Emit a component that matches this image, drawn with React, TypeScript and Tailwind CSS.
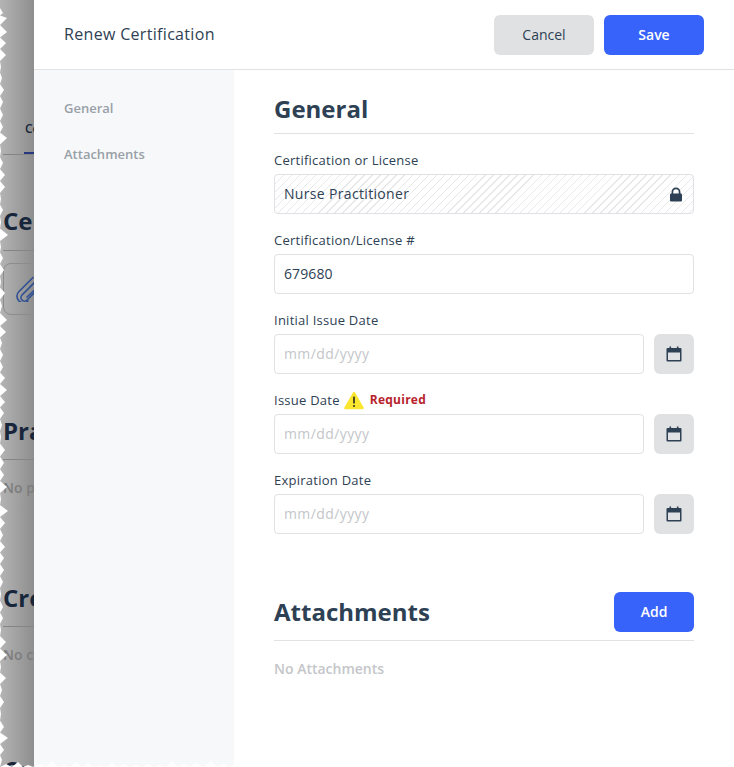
import React from "react";

const tips: number[][] = [[13,3],[18,7],[32,7],[43,6],[55,6],[67,1],[78,2],[90,4],[102,3],[115,3],[127,3],[138,7],[151,1],[163,3],[175,5],[187,5],[199,1],[210,3],[222,1],[235,8],[247,1],[258,3],[270,4],[282,1],[293,5],[306,2],[320,7],[332,6],[343,2],[355,3],[367,3],[378,5],[390,7],[402,5],[413,4],[425,2],[437,1],[450,5],[463,4],[475,4],[487,7],[499,1],[511,8],[523,5],[535,3],[547,5],[558,4],[570,4],[582,3],[594,1],[607,3],[618,3],[630,1],[642,6],[655,7],[667,1],[678,6],[690,2],[702,4],[714,1],[727,4],[738,8],[750,4],[760,2]];

function tornPoints() {
  const pts: string[] = ["0,8"];
  tips.forEach(([y, x], i) => {
    pts.push(`${x},${y}`);
    const next = tips[i + 1];
    pts.push(`0,${next ? (y + next[0]) / 2 : 767}`);
  });
  return pts.join(" ");
}

const bottomTips = [[6,764],[18,762],[28,765],[40,764],[52,761],[64,765],[76,762],[88,763],[100,765],[112,763],[124,764],[136,765],[148,764],[160,765],[172,761],[184,764],[196,763],[211,761],[224,764],[234,765]];
function bottomPoints() {
  const pts: string[] = ["0,767"];
  bottomTips.forEach(([x, y], i) => {
    pts.push(`${x},${y}`);
    const next = bottomTips[i + 1];
    if (next) pts.push(`${(x + next[0]) / 2},767`);
  });
  pts.push("234,767");
  return pts.join(" ");
}

function Calendar() {
  return (
    <svg width="16" height="16" viewBox="0 0 16 16" fill="none">
      <rect x="0.5" y="2" width="15" height="13.5" rx="1" fill="#2e4154" />
      <rect x="2" y="6.5" width="12" height="7.5" fill="#e0e2e5" />
      <rect x="3.5" y="0.5" width="1.6" height="3" fill="#2e4154" />
      <rect x="10.9" y="0.5" width="1.6" height="3" fill="#2e4154" />
    </svg>
  );
}

function Lock() {
  return (
    <svg width="14" height="15" viewBox="0 0 14 15" fill="none">
      <rect x="1" y="6.5" width="12" height="8" rx="1" fill="#2e4154" />
      <path d="M3.4 7V4.9a3.6 3.6 0 0 1 7.2 0V7" stroke="#2e4154" strokeWidth="1.7" />
    </svg>
  );
}

function Warn() {
  return (
    <svg width="20" height="19" viewBox="0 0 20 19" fill="none">
      <path d="M10 2 L18.6 17 H1.4 Z" fill="#fae62f" stroke="#fae62f" strokeWidth="2.4" strokeLinejoin="round" />
      <rect x="9.1" y="5.5" width="1.8" height="7" rx="0.6" fill="#3a3a1e" />
      <circle cx="10" cy="15" r="1.1" fill="#3a3a1e" />
    </svg>
  );
}

function Label({ children }: { children: React.ReactNode }) {
  return <div className="h-[24px] text-[13px] leading-[20px] font-medium tracking-[0.25px] text-[#2e4154]">{children}</div>;
}

function DateField({ label }: { label: React.ReactNode }) {
  return (
    <div className="mt-[16px] h-[64px]">
      <Label>{label}</Label>
      <div className="flex gap-[10px]">
        <div className="flex h-[40px] flex-1 items-center rounded-[4px] border border-[#dfe1e4] bg-white px-[9px] pb-[2px] text-[14px] font-medium tracking-[0.4px] text-[#c4c6c9]">
          mm/dd/yyyy
        </div>
        <button className="flex h-[40px] w-[40px] items-center justify-center rounded-[6px] bg-[#dfe1e3]">
          <Calendar />
        </button>
      </div>
    </div>
  );
}

export default function App() {
  return (
    <div className="relative flex h-[767px] w-[734px] overflow-hidden bg-white font-['Open_Sans',sans-serif]">
      <div className="relative h-full w-[34px] shrink-0 overflow-hidden bg-[linear-gradient(to_right,#b4b4b4,#8e8e8e)]">
        <div className="flex w-[200px] flex-col pl-[3px] text-[#17263a]">
          <div className="ml-[22px] mt-[121px] h-[16px] text-[12px] font-semibold leading-[16px]">Certifications</div>
          <div className="ml-[21px] mt-[15px] h-[2px] w-[60px] bg-[#26397f]" />
          <div className="h-px w-full bg-[#858585]" />
          <div className="mt-[49px] h-[34px] text-[24px] font-bold leading-[34px]">Certifications</div>
          <div className="mt-[12px] h-px bg-[#858585]" />
          <div className="mt-[12px] flex h-[52px] items-center rounded-[8px] border border-[#8c8c8c] pl-[12px]">
            <svg width="26" height="26" viewBox="0 0 26 26" fill="none" stroke="#2f4f93" strokeWidth="1.6" strokeLinecap="round">
              <path d="M21 4 6 19a3.5 3.5 0 0 0 5 5L24 11" />
              <path d="M17 1.5 3 15.5a6.5 6.5 0 0 0 9 9.5" />
              <path d="M21 4a3 3 0 0 1 4 4L11 21" />
            </svg>
          </div>
          <div className="mt-[99px] h-[34px] text-[24px] font-bold leading-[34px]">Practice</div>
          <div className="mt-[11px] h-px bg-[#858585]" />
          <div className="mt-[18px] h-[20px] text-[14px] font-semibold leading-[20px] text-[#7d7d7d]">No practice</div>
          <div className="mt-[83px] h-[34px] text-[24px] font-bold leading-[34px]">Credentials</div>
          <div className="mt-[11px] h-px bg-[#858585]" />
          <div className="mt-[18px] h-[20px] text-[14px] font-semibold leading-[20px] text-[#7d7d7d]">No credentials</div>
          <div className="mt-[88px] h-[34px] text-[24px] font-bold leading-[34px]">Current</div>
        </div>
        <svg className="absolute left-0 top-0" width="10" height="767" viewBox="0 0 10 767">
          <polygon points={tornPoints()} fill="#ffffff" />
        </svg>
      </div>

      <div className="flex h-full min-w-0 flex-1 flex-col">
        <div className="flex h-[70px] shrink-0 items-center justify-between border-b border-[#e1e2e4] bg-white pl-[30px] pr-[30px]">
          <div className="pb-[2px] text-[16px] font-medium tracking-[0.32px] text-[#2e4154]">Renew Certification</div>
          <div className="flex gap-[10px]">
            <button className="h-[40px] w-[100px] rounded-[6px] bg-[#dfe1e3] text-[14px] font-medium text-[#2e4154]">Cancel</button>
            <button className="h-[40px] w-[100px] rounded-[6px] bg-[#3763fb] text-[14px] font-semibold text-white">Save</button>
          </div>
        </div>
        <div className="flex min-h-0 flex-1">
          <div className="w-[200px] shrink-0 bg-[#f7f8fa] pl-[30px] pt-[28px] text-[13px] font-semibold text-[#98a0a7]">
            <div className="h-[20px] leading-[20px]">General</div>
            <div className="mt-[26px] h-[20px] leading-[20px]">Attachments</div>
          </div>
          <div className="flex-1 px-[40px]">
            <div className="flex h-[64px] items-end border-b border-[#e1e2e4] pb-[6px] text-[24px] font-bold leading-[36px] text-[#2e4154]">General</div>
            <div className="mt-[16px] h-[64px]">
              <Label>Certification or License</Label>
              <div className="flex h-[40px] items-center justify-between rounded-[4px] border border-[#dfe1e4] bg-[repeating-linear-gradient(135deg,#e6e8ea_0,#e6e8ea_1px,#ffffff_1px,#ffffff_5.7px)] pl-[9px] pr-[10px] text-[14px] font-medium tracking-[0.33px] text-[#2e4154]">
                <span className="pb-[2px]">Nurse Practitioner</span>
                <Lock />
              </div>
            </div>
            <div className="mt-[16px] h-[64px]">
              <Label>Certification/License #</Label>
              <div className="flex h-[40px] items-center rounded-[4px] border border-[#dfe1e4] bg-white px-[9px] pb-[2px] text-[14px] font-medium tracking-[0.1px] text-[#2e4154]">679680</div>
            </div>
            <DateField label="Initial Issue Date" />
            <DateField
              label={
                <span className="flex items-center">
                  Issue Date
                  <span className="ml-[4px] flex"><Warn /></span>
                  <span className="ml-[6px] text-[12px] font-bold tracking-[0.25px] text-[#b8222c]">Required</span>
                </span>
              }
            />
            <DateField label="Expiration Date" />
            <div className="mt-[58px] flex h-[49px] items-start justify-between border-b border-[#e1e2e4]">
              <div className="mt-[2px] text-[24px] font-bold leading-[36px] text-[#2e4154]">Attachments</div>
              <button className="h-[40px] w-[80px] rounded-[6px] bg-[#3763fb] pb-[1px] text-[14px] font-semibold text-white">Add</button>
            </div>
            <div className="mt-[18px] h-[20px] text-[14px] font-semibold leading-[20px] text-[#c4c6c9]">No Attachments</div>
          </div>
        </div>
      </div>
      <svg className="absolute bottom-0 left-0" width="234" height="7" viewBox="0 760 234 7">
        <polygon points={bottomPoints()} fill="#ffffff" />
      </svg>
    </div>
  );
}
